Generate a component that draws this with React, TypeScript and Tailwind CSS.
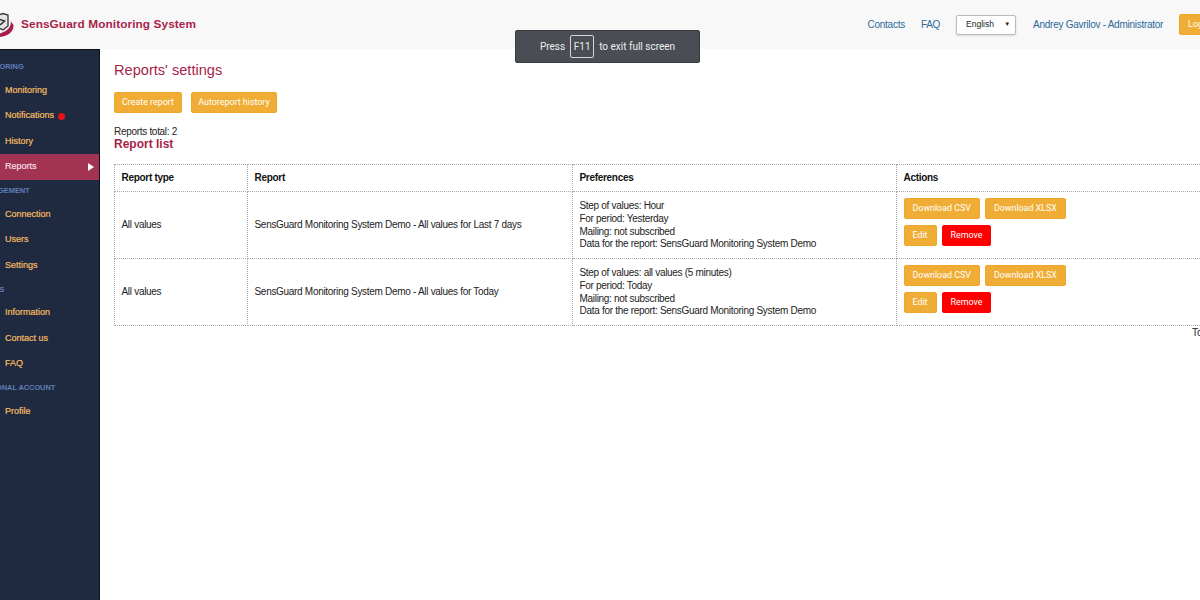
const sections = [
  { label: 'MONITORING', items: ['Monitoring', 'Notifications', 'History', 'Reports'] },
  { label: 'MANAGEMENT', items: ['Connection', 'Users', 'Settings'] },
  { label: 'GUIDES', items: ['Information', 'Contact us', 'FAQ'] },
  { label: 'PERSONAL ACCOUNT', items: ['Profile'] },
]

const reports = [
  {
    type: 'All values',
    name: 'SensGuard Monitoring System Demo - All values for Last 7 days',
    prefs: ['Step of values: Hour', 'For period: Yesterday', 'Mailing: not subscribed', 'Data for the report: SensGuard Monitoring System Demo'],
  },
  {
    type: 'All values',
    name: 'SensGuard Monitoring System Demo - All values for Today',
    prefs: ['Step of values: all values (5 minutes)', 'For period: Today', 'Mailing: not subscribed', 'Data for the report: SensGuard Monitoring System Demo'],
  },
]

const btn = "h-[21px] px-2 rounded-[2px] bg-[#f0ad35] border border-[#eea62c] text-white text-[8.900px] whitespace-nowrap font-['Roboto',sans-serif] flex items-center justify-center"
const cell = 'border border-dotted border-[#a9a9a9] px-[6.500px] align-middle'

function Logo() {
  return (
    <svg width="14" height="28" viewBox="0 0 14 28" className="shrink-0 mt-[2px]">
      <path d="M-5 4 L3 1.500 L8 3 V14 L3 18 L-5 14 Z" fill="#e4e4e4" stroke="#3c3c3c" strokeWidth="1.400" />
      <path d="M-3 6.500 L4.500 9 L0 13" fill="none" stroke="#333" strokeWidth="1.600" />
      <path d="M10.500 9 C12 15 7 20 -2 22 L-2 25 C7 25 14 20 13.500 13 Z" fill="#a81f4a" />
    </svg>
  )
}

export default function App() {
  return (
    <div className="relative w-[1200px] h-[600px] overflow-hidden bg-white font-['Liberation_Sans',Arial,sans-serif] text-[#222]">
      <header className="h-[49px] bg-[#f8f8f8] flex items-center w-[1227px]">
        <Logo />
        <span className="ml-[7px] text-[11.800px] font-bold tracking-[0.1px] text-[#a81f4a] whitespace-nowrap">SensGuard Monitoring System</span>
        <nav className="ml-auto flex items-center text-[10px] tracking-[-0.27px] text-[#2b6a9a] whitespace-nowrap">
          <span>Contacts</span>
          <span className="ml-[16px]">FAQ</span>
          <div className="ml-[16px] w-[60px] h-[20px] bg-white border border-[#bbb] rounded-[2px] shadow-sm flex items-center justify-between pl-[9px] pr-[5px] text-[8.500px] tracking-normal text-[#222]">
            English
            <span className="text-[6px]">▼</span>
          </div>
          <span className="ml-[17px]">Andrey Gavrilov - Administrator</span>
          <button className={`${btn} ml-[16px] h-[20px] tracking-normal`}>Log out</button>
        </nav>
      </header>

      <div className="flex h-[551px]">
        <aside className="w-[100px] shrink-0 bg-[#1f2a40] border-r border-t border-[#111] overflow-hidden pt-[10px]">
          {sections.map(section => (
            <div key={section.label}>
              <div className="h-[14px] -ml-[24px] text-[7.500px] tracking-[-0.1px] font-bold text-[#5f7db8] whitespace-nowrap flex items-center">{section.label}</div>
              <div className="mt-[4px] mb-[4.400px]">
                {section.items.map(item => (
                  <div
                    key={item}
                    className={`h-[25.400px] pl-[5px] pr-[7px] flex items-center text-[9px] [-webkit-text-stroke:0.2px] ${item === 'Reports' ? 'bg-[#a23353] text-[#f5dfe2]' : 'text-[#f5bd62]'}`}
                  >
                    {item}
                    {item === 'Notifications' && <span className="ml-[4px] w-[7px] h-[7px] rounded-full bg-[#e8101c]"></span>}
                    {item === 'Reports' && <span className="ml-auto -mr-[2px] w-0 h-0 border-y-[4px] border-y-transparent border-l-[6px] border-l-white"></span>}
                  </div>
                ))}
              </div>
            </div>
          ))}
        </aside>

        <main className="pl-[14px] w-[1140px] shrink-0">
          <h1 className="mt-[12px] text-[14.600px] leading-[18px] text-[#a81f4a]">Reports' settings</h1>
          <div className="mt-[13px] flex gap-[9px]">
            <button className={`${btn} w-[68px] !px-0`}>Create report</button>
            <button className={`${btn} w-[86px] !px-0`}>Autoreport history</button>
          </div>
          <div className="mt-[13px] text-[10px] tracking-[-0.3px] leading-[12px]">Reports total: 2</div>
          <h2 className="text-[12px] leading-[13px] font-bold text-[#a81f4a]">Report list</h2>
          <table className="mt-[13px] border-collapse table-fixed w-[1110px] text-[10px] tracking-[-0.3px] leading-[12.800px]">
            <thead>
              <tr className="h-[27px] text-left font-bold text-[#111]">
                <th className={`${cell} w-[133px]`}>Report type</th>
                <th className={`${cell} w-[325px]`}>Report</th>
                <th className={`${cell} w-[324px]`}>Preferences</th>
                <th className={cell}>Actions</th>
              </tr>
            </thead>
            <tbody>
              {reports.map(report => (
                <tr key={report.name} className="h-[67px]">
                  <td className={cell}>{report.type}</td>
                  <td className={cell}>{report.name}</td>
                  <td className={`${cell} pt-[1px]`}>
                    {report.prefs.map(pref => <div key={pref}>{pref}</div>)}
                  </td>
                  <td className={`${cell} !align-top pt-[6px]`}>
                    <div className="flex gap-[5px] tracking-normal">
                      <button className={btn}>Download CSV</button>
                      <button className={btn}>Download XLSX</button>
                    </div>
                    <div className="flex gap-[5px] mt-[6px] tracking-normal">
                      <button className={btn}>Edit</button>
                      <button className={`${btn} bg-[#fe0000] border-[#fe0000]`}>Remove</button>
                    </div>
                  </td>
                </tr>
              ))}
            </tbody>
          </table>
          <div className="ml-[1078px] mt-[1px] text-[10px] leading-[12px] whitespace-nowrap">Total: 2</div>
        </main>
      </div>

      <div className="absolute left-[515px] top-[30px] w-[185px] h-[33px] rounded-[2px] bg-[#4b4d54] border border-[#3a3b40] flex items-center justify-center gap-[5px] text-[10px] text-[#eee] font-['Roboto',sans-serif]">
        <span>Press</span>
        <span className="h-[23px] w-[24px] border border-[#d5d5d5] rounded-[2px] flex items-center justify-center">F11</span>
        <span>to exit full screen</span>
      </div>
    </div>
  )
}
